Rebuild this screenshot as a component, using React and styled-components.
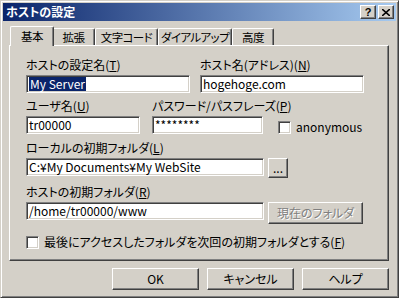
import React from "react";
import styled, { createGlobalStyle } from "styled-components";

const GlobalStyle = createGlobalStyle`
  html, body {
    margin: 0;
    padding: 0;
    background: #d4d0c8;
  }
  body {
    font-family: "Noto Sans CJK JP", "Liberation Sans", sans-serif;
    font-size: 12px;
    font-feature-settings: "palt";
    color: #000;
  }
  * {
    box-sizing: border-box;
  }
`;

const Window = styled.div`
  width: 399px;
  height: 298px;
  padding: 2px;
  background: #d4d0c8;
  border: 1px solid;
  border-color: #d4d0c8 #404040 #404040 #d4d0c8;
  box-shadow: inset 1px 1px #fff, inset -1px -1px #808080;
`;

const TitleBar = styled.div`
  height: 18px;
  display: flex;
  align-items: center;
  justify-content: space-between;
  padding: 0 2px 0 3px;
  background: linear-gradient(to right, #0a246a, #a6caf0);
`;

const Title = styled.span`
  color: #fff;
  font-weight: bold;
  font-size: 12px;
  line-height: 14px;
`;

const TitleButtons = styled.div`
  display: flex;
  gap: 2px;
`;

const TitleButton = styled.div`
  width: 16px;
  height: 14px;
  display: flex;
  align-items: center;
  justify-content: center;
  background: #d4d0c8;
  border: 1px solid;
  border-color: #fff #404040 #404040 #fff;
  box-shadow: inset -1px -1px #808080;
  font-family: "Liberation Sans", sans-serif;
  font-weight: bold;
  font-size: 11px;
  line-height: 1;
`;

const Body = styled.div`
  padding: 5px 7px 0 6px;
`;

const TabStrip = styled.div`
  display: flex;
  align-items: flex-end;
  height: 19px;
  padding-left: 3px;
`;

const Tab = styled.div`
  position: relative;
  width: ${(p) => p.$w}px;
  height: ${(p) => (p.$active ? 20 : 17)}px;
  margin: ${(p) => (p.$active ? "0 -2px -1px -2px" : "0")};
  z-index: ${(p) => (p.$active ? 2 : 1)};
  display: flex;
  justify-content: center;
  align-items: center;
  padding-bottom: ${(p) => (p.$active ? 2 : 0)}px;
  background: #d4d0c8;
  border-top: 1px solid #fff;
  border-left: 1px solid #fff;
  border-right: 1px solid #404040;
  border-top-left-radius: 2px;
  border-top-right-radius: 2px;
  box-shadow: inset -1px 0 #808080;
  font-size: 11.5px;
  line-height: 14px;
  white-space: nowrap;
  letter-spacing: -0.6px;
`;

const Panel = styled.div`
  height: 216px;
  padding: 12px 0 0 16px;
  border: 1px solid;
  border-color: #fff #404040 #404040 #fff;
  box-shadow: inset -1px -1px #808080;
`;

const Row = styled.div`
  display: flex;
  align-items: flex-end;
  gap: ${(p) => p.$gap || 0}px;
  margin-top: ${(p) => p.$top || 0}px;
`;

const Field = styled.div`
  display: flex;
  flex-direction: column;
  width: ${(p) => p.$w}px;
`;

const Label = styled.div`
  line-height: 14px;
  height: 14px;
  margin-bottom: 3px;
  white-space: nowrap;
`;

const InputLine = styled.div`
  display: flex;
  align-items: flex-start;
  gap: 4px;
`;

const TextBox = styled.div`
  width: ${(p) => (p.$w ? `${p.$w}px` : "100%")};
  height: 18px;
  display: flex;
  align-items: center;
  padding-left: 2px;
  background: #fff;
  border: 1px solid;
  border-color: #808080 #fff #fff #808080;
  box-shadow: inset 1px 1px #404040, inset -1px -1px #d4d0c8;
  line-height: 14px;
  white-space: nowrap;
  overflow: hidden;
`;

const Selected = styled.span`
  background: #0a246a;
  color: #fff;
  padding: 0 1px;
`;

const Check = styled.label`
  display: flex;
  align-items: center;
  gap: 5px;
  margin-left: ${(p) => p.$left || 0}px;
  margin-bottom: ${(p) => p.$bottom || 0}px;
  white-space: nowrap;
  line-height: 14px;
`;

const Box = styled.span`
  width: 13px;
  height: 13px;
  background: #fff;
  border: 1px solid;
  border-color: #808080 #fff #fff #808080;
  box-shadow: inset 1px 1px #404040, inset -1px -1px #d4d0c8;
`;

const Button = styled.div`
  width: ${(p) => p.$w}px;
  height: ${(p) => p.$h || 22}px;
  display: flex;
  align-items: center;
  justify-content: center;
  background: #d4d0c8;
  border: 1px solid;
  border-color: #fff #404040 #404040 #fff;
  box-shadow: inset -1px -1px #808080;
  line-height: 14px;
  color: ${(p) => (p.$disabled ? "#808080" : "#000")};
  text-shadow: ${(p) => (p.$disabled ? "1px 1px #fff" : "none")};
`;

const ButtonRow = styled.div`
  display: flex;
  justify-content: flex-end;
  gap: 8px;
  margin-top: 7px;
`;

export default function App() {
  return (
    <>
      <GlobalStyle />
      <Window>
        <TitleBar>
          <Title>ホストの設定</Title>
          <TitleButtons>
            <TitleButton>?</TitleButton>
            <TitleButton>
              <svg width="8" height="7" viewBox="0 0 8 7">
                <path d="M0 0 L8 7 M8 0 L0 7" stroke="#000" strokeWidth="1.6" />
              </svg>
            </TitleButton>
          </TitleButtons>
        </TitleBar>
        <Body>
          <TabStrip>
            <Tab $active $w={44}>基本</Tab>
            <Tab $w={43}>拡張</Tab>
            <Tab $w={63}>文字コード</Tab>
            <Tab $w={74}>ダイアルアップ</Tab>
            <Tab $w={42}>高度</Tab>
          </TabStrip>
          <Panel>
            <Row $gap={10}>
              <Field $w={164}>
                <Label>
                  ホストの設定名(<u>T</u>)
                </Label>
                <TextBox>
                  <Selected>My Server</Selected>
                </TextBox>
              </Field>
              <Field $w={164}>
                <Label>
                  ホスト名(アドレス)(<u>N</u>)
                </Label>
                <TextBox>hogehoge.com</TextBox>
              </Field>
            </Row>
            <Row $gap={12} $top={6}>
              <Field $w={114}>
                <Label>
                  ユーザ名(<u>U</u>)
                </Label>
                <TextBox>tr00000</TextBox>
              </Field>
              <Field $w={111}>
                <Label>
                  パスワード/パスフレーズ(<u>P</u>)
                </Label>
                <TextBox>********</TextBox>
              </Field>
              <Check $left={3}>
                <Box />
                <span>anonymous</span>
              </Check>
            </Row>
            <Row $top={7}>
              <Field>
                <Label>
                  ローカルの初期フォルダ(<u>L</u>)
                </Label>
                <InputLine>
                  <TextBox $w={238}>C:¥My Documents¥My WebSite</TextBox>
                  <Button $w={20} $h={20}>
                    ...
                  </Button>
                </InputLine>
              </Field>
            </Row>
            <Row $top={7}>
              <Field>
                <Label>
                  ホストの初期フォルダ(<u>R</u>)
                </Label>
                <InputLine>
                  <TextBox $w={238}>/home/tr00000/www</TextBox>
                  <Button $w={95} $disabled>
                    現在のフォルダ
                  </Button>
                </InputLine>
              </Field>
            </Row>
            <Row $top={11}>
              <Check>
                <Box />
                <span>
                  最後にアクセスしたフォルダを次回の初期フォルダとする(<u>F</u>)
                </span>
              </Check>
            </Row>
          </Panel>
          <ButtonRow>
            <Button $w={87}>OK</Button>
            <Button $w={87}>キャンセル</Button>
            <Button $w={87}>ヘルプ</Button>
          </ButtonRow>
        </Body>
      </Window>
    </>
  );
}
